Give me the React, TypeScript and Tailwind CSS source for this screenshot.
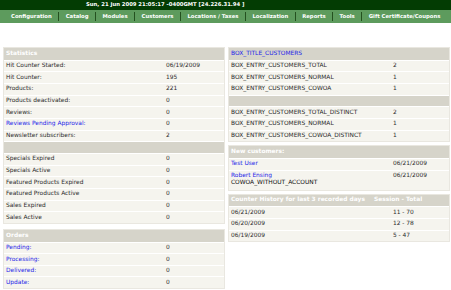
import type { ReactNode } from "react"

const menu = [
  "Configuration",
  "Catalog",
  "Modules",
  "Customers",
  "Locations / Taxes",
  "Localization",
  "Reports",
  "Tools",
  "Gift Certificate/Coupons",
]

type Row = { label?: ReactNode; value?: ReactNode; link?: boolean; blank?: boolean }

const stats: Row[] = [
  { label: "Hit Counter Started:", value: "06/19/2009" },
  { label: "Hit Counter:", value: "195" },
  { label: "Products:", value: "221" },
  { label: "Products deactivated:", value: "0" },
  { label: "Reviews:", value: "0" },
  { label: "Reviews Pending Approval:", value: "0", link: true },
  { label: "Newsletter subscribers:", value: "2" },
  { blank: true },
  { label: "Specials Expired", value: "0" },
  { label: "Specials Active", value: "0" },
  { label: "Featured Products Expired", value: "0" },
  { label: "Featured Products Active", value: "0" },
  { label: "Sales Expired", value: "0" },
  { label: "Sales Active", value: "0" },
]

const orders: Row[] = [
  { label: "Pending:", value: "0", link: true },
  { label: "Processing:", value: "0", link: true },
  { label: "Delivered:", value: "0", link: true },
  { label: "Update:", value: "0", link: true },
]

const customers: Row[] = [
  { label: "BOX_ENTRY_CUSTOMERS_TOTAL", value: "2" },
  { label: "BOX_ENTRY_CUSTOMERS_NORMAL", value: "1" },
  { label: "BOX_ENTRY_CUSTOMERS_COWOA", value: "1" },
  { blank: true },
  { label: "BOX_ENTRY_CUSTOMERS_TOTAL_DISTINCT", value: "2" },
  { label: "BOX_ENTRY_CUSTOMERS_NORMAL", value: "1" },
  { label: "BOX_ENTRY_CUSTOMERS_COWOA_DISTINCT", value: "1" },
]

const history: Row[] = [
  { label: "06/21/2009", value: "11 - 70" },
  { label: "06/20/2009", value: "12 - 78" },
  { label: "06/19/2009", value: "5 - 47" },
]

function Panel({ title, titleLink, right, rows, col }: { title: string; titleLink?: boolean; right?: string; rows: Row[]; col: string }) {
  return (
    <div className="flex flex-col gap-px border border-[#e9e7e0] bg-white">
      <div className={`flex h-[11.67px] items-center whitespace-nowrap bg-[#d6d4ca] px-[2px] ${titleLink ? "text-[#2424e8]" : "font-bold text-white"}`}>
        <span className={right ? "w-[143px]" : col}>{title}</span>
        {right && <span>{right}</span>}
      </div>
      {rows.map((r, i) =>
        r.blank ? (
          <div key={i} className="h-[10.67px] bg-[#d6d4ca]" />
        ) : (
          <div key={i} className="flex h-[10.67px] items-center bg-[#f5f4ee] px-[2px]">
            <span className={`${col} ${r.link ? "text-[#2424e8]" : ""}`}>{r.label}</span>
            <span>{r.value}</span>
          </div>
        )
      )}
    </div>
  )
}

export default function App() {
  return (
    <div className="h-[290px] w-[451px] overflow-hidden bg-white font-['DejaVu_Sans',sans-serif] text-[5.9px] leading-none text-[#2a2a2a]">
      <div className="flex h-[10px] items-center whitespace-nowrap bg-[#033c03] pl-[86px] text-[5.3px] font-bold text-white">
        Sun, 21 Jun 2009 21:05:17 -0400GMT [24.226.31.94 ]
      </div>
      <div className="flex h-[13px] items-center whitespace-nowrap bg-[#5d9b5d] pl-[11px] text-[5.3px] font-bold text-white">
        {menu.map((m, i) => (
          <div key={m} className="flex items-center">
            {i > 0 && <span className="mx-[6.5px] h-[9px] w-px bg-[#24501f]" />}
            <span>{m}</span>
          </div>
        ))}
      </div>
      <div className="flex gap-[3px] pl-[3px] pt-[24px]">
        <div className="flex w-[222px] flex-col gap-[5px]">
          <Panel title="Statistics" rows={stats} col="w-[160px]" />
          <Panel title="Orders" rows={orders} col="w-[160px]" />
        </div>
        <div className="flex w-[222px] flex-col gap-[3px]">
          <Panel title="BOX_TITLE_CUSTOMERS" titleLink rows={customers} col="w-[162px]" />
          <div className="flex flex-col gap-px border border-[#e9e7e0] bg-white">
            <div className="flex h-[11.67px] items-center bg-[#d6d4ca] px-[2px] font-bold text-white">New customers:</div>
            <div className="flex h-[10.67px] items-center bg-[#f5f4ee] px-[2px]">
              <span className="w-[162px] text-[#2424e8]">Test User</span>
              <span>06/21/2009</span>
            </div>
            <div className="flex h-[19px] items-start bg-[#f5f4ee] px-[2px] pt-[2px]">
              <div className="flex w-[162px] flex-col gap-[2px]">
                <span className="text-[#2424e8]">Robert Ensing</span>
                <span className="text-[#111]">COWOA_WITHOUT_ACCOUNT</span>
              </div>
              <span>06/21/2009</span>
            </div>
          </div>
          <Panel title="Counter History for last 3 recorded days" right="Session - Total" rows={history} col="w-[162px]" />
        </div>
      </div>
    </div>
  )
}
